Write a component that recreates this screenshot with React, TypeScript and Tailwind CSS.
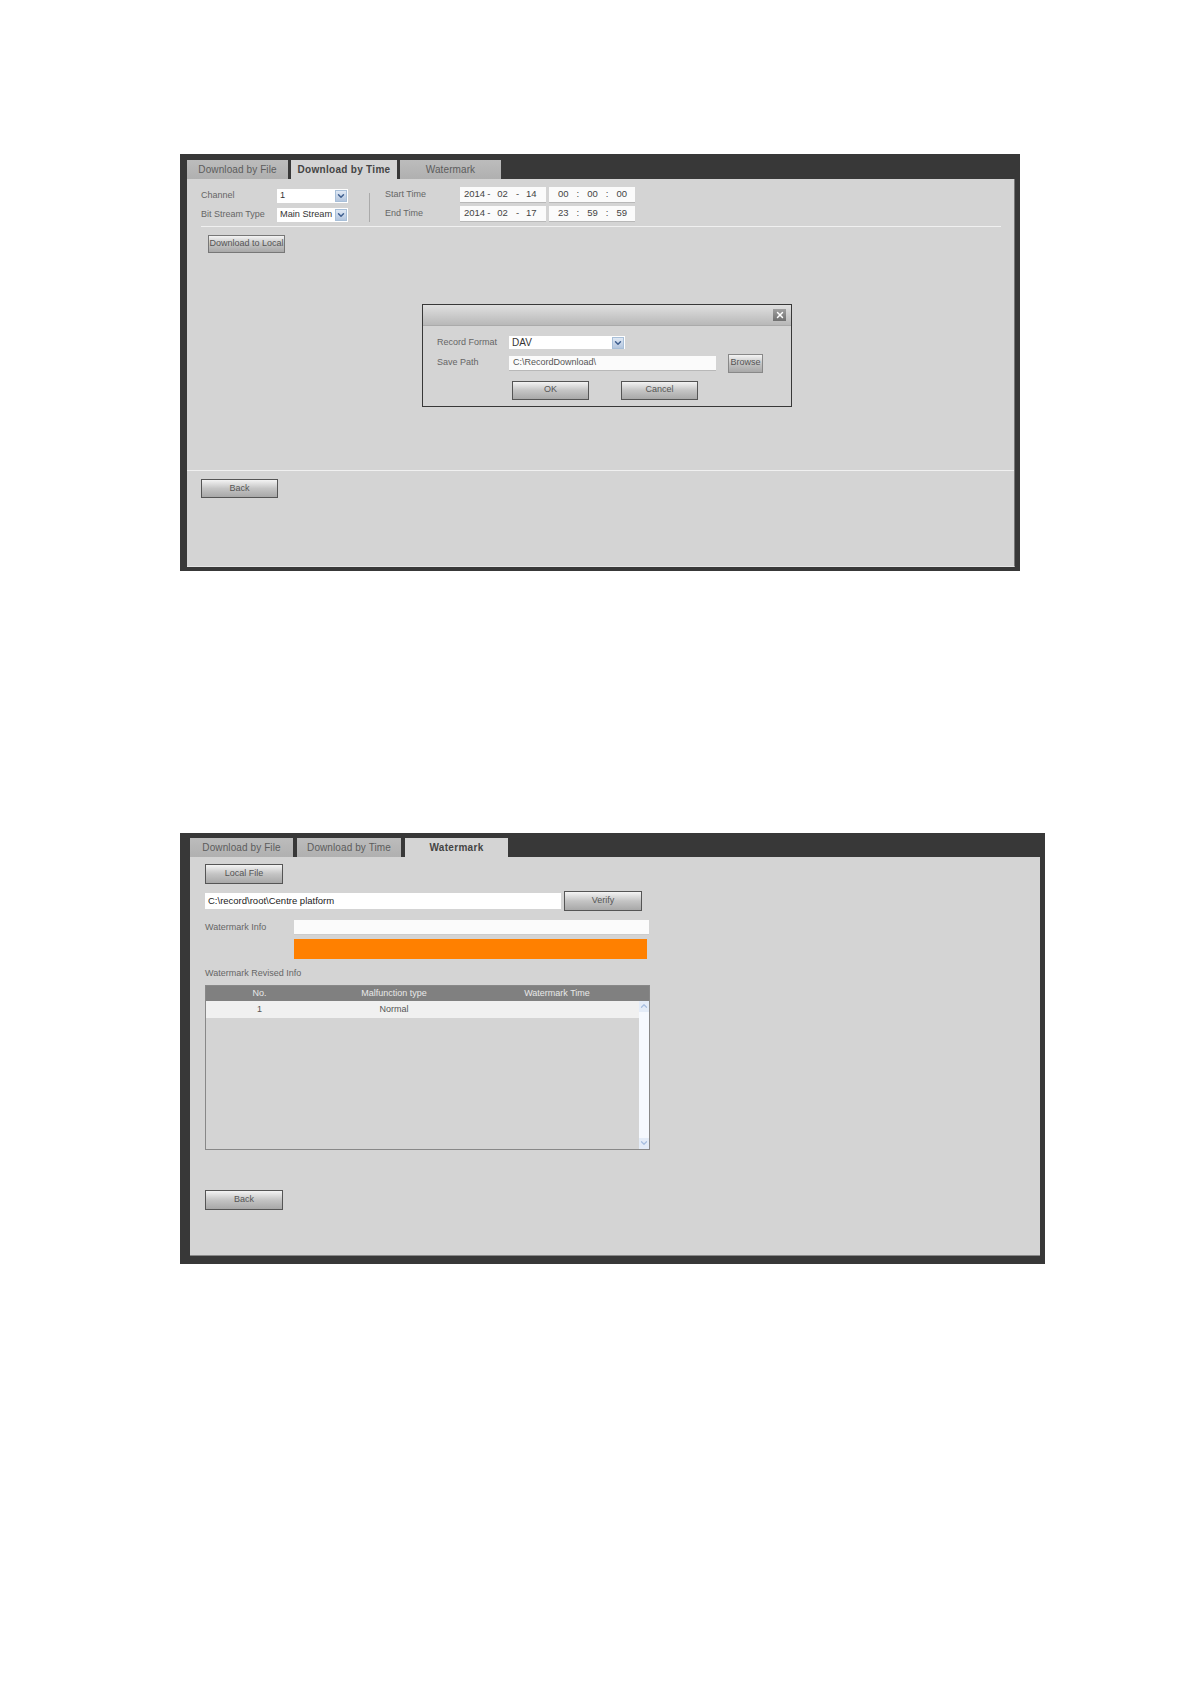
import { ChevronDown, ChevronUp, X } from 'lucide-react'

const Btn = ({ label, className = '' }: { label: string; className?: string }) => (
  <button
    type="button"
    className={`flex items-center justify-center shrink-0 border border-[#555] bg-gradient-to-b from-[#f4f4f4] via-[#c4c4c4] to-[#a8a8a8] text-[9px] text-[#555] ${className}`}
  >
    {label}
  </button>
)

const Tab = ({ label, active, className = '' }: { label: string; active?: boolean; className?: string }) => (
  <div
    className={`flex items-center justify-center h-[19px] pb-px text-[10px] ${
      active ? 'bg-[#d4d4d4] font-bold text-[#444] tracking-[0.3px]' : 'bg-gradient-to-b from-[#bcbcbc] to-[#b0b0b0] text-[#5c5c5c] tracking-[0.1px]'
    } ${className}`}
  >
    {label}
  </div>
)

const Select = ({ value, className = '' }: { value: string; className?: string }) => (
  <div className={`flex items-center bg-white text-[9.2px] text-[#333] pl-[3px] pr-px shrink-0 ${className}`}>
    <span className="flex-1 whitespace-nowrap">{value}</span>
    <span className="flex items-center justify-center w-3 h-3 border border-[#a8bfd8] bg-gradient-to-b from-[#dfe8f4] to-[#b4c6de] text-[#3f5f8f]">
      <ChevronDown size={10} strokeWidth={3.5} />
    </span>
  </div>
)

const DateBox = ({ y, m, d }: { y: string; m: string; d: string }) => (
  <div className="flex items-center w-[86px] h-4 bg-[#fbfbfb] border-b border-[#b8b8b8] pl-1 text-[9.5px] text-[#444]">
    <span>{y}</span>
    <span className="ml-[2px]">-</span>
    <span className="ml-[7px]">{m}</span>
    <span className="ml-[8px]">-</span>
    <span className="ml-[7px]">{d}</span>
  </div>
)

const TimeBox = ({ h, m, s }: { h: string; m: string; s: string }) => (
  <div className="flex items-center gap-[8px] w-[86px] h-4 bg-[#fbfbfb] border-b border-[#b8b8b8] pl-[9px] text-[9.5px] text-[#444]">
    <span>{h}</span>
    <span>:</span>
    <span>{m}</span>
    <span>:</span>
    <span>{s}</span>
  </div>
)

const label = 'text-[9px] text-[#666] shrink-0'

function DownloadByTime() {
  return (
    <section className="relative ml-[180px] w-[840px] h-[417px] bg-[#383838] pt-[6px] pl-[7px]">
      <div className="flex gap-[3px]">
        <Tab label="Download by File" className="w-[101px]" />
        <Tab label="Download by Time" active className="w-[106px]" />
        <Tab label="Watermark" className="w-[101px]" />
      </div>
      <div className="w-[828px] h-[388px] bg-[#d4d4d4] border-r border-b border-r-[#777] border-b-[#e4e4e4]">
        <div className="flex h-[47px] pt-2 pl-[14px]">
          <div className="flex flex-col gap-[5px] pt-[2px]">
            <div className="flex items-center">
              <span className={`${label} w-[76px]`}>Channel</span>
              <Select value="1" className="w-[71px] h-[14px]" />
            </div>
            <div className="flex items-center">
              <span className={`${label} w-[76px]`}>Bit Stream Type</span>
              <Select value="Main Stream" className="w-[71px] h-[14px]" />
            </div>
          </div>
          <div className="w-px h-[29px] mt-[6px] ml-[21px] mr-[15px] bg-[#aaa]" />
          <div className="flex flex-col gap-[3px]">
            <div className="flex items-center">
              <span className={`${label} w-[75px]`}>Start Time</span>
              <DateBox y="2014" m="02" d="14" />
              <div className="ml-[3px]"><TimeBox h="00" m="00" s="00" /></div>
            </div>
            <div className="flex items-center">
              <span className={`${label} w-[75px]`}>End Time</span>
              <DateBox y="2014" m="02" d="17" />
              <div className="ml-[3px]"><TimeBox h="23" m="59" s="59" /></div>
            </div>
          </div>
        </div>
        <div className="h-px ml-[14px] w-[800px] bg-[#f0f0f0]" />
        <Btn label="Download to Local" className="ml-[21px] mt-2 w-[77px] h-[18px] !text-[9px] !border-[#777] whitespace-nowrap" />
        <div className="h-px mt-[217px] bg-[#f0f0f0]" />
        <Btn label="Back" className="ml-[14px] mt-2 w-[77px] h-[19px]" />
      </div>

      <div className="absolute left-[242px] top-[150px] w-[370px] h-[103px] bg-[#d4d4d4] border border-[#383838]">
        <div className="flex items-center justify-end h-[21px] pr-[5px] bg-gradient-to-b from-[#e0e0e0] to-[#b8b8b8] border-b border-[#aaa]">
          <span className="flex items-center justify-center w-[13px] h-[12px] bg-gradient-to-b from-[#a0a0a0] to-[#707070] text-white">
            <X size={10} strokeWidth={3.5} />
          </span>
        </div>
        <div className="flex items-center mt-[10px] pl-[14px]">
          <span className={`${label} w-[72px]`}>Record Format</span>
          <Select value="DAV" className="w-[116px] h-[13px] !text-[10px]" />
        </div>
        <div className="flex items-center mt-[4px] pl-[14px]">
          <span className={`${label} w-[72px]`}>Save Path</span>
          <div className="flex items-center w-[207px] h-[15px] bg-[#fbfbfb] border-b border-[#b8b8b8] pl-1 text-[9px] text-[#555]">
            C:\RecordDownload\
          </div>
          <Btn label="Browse" className="ml-[12px] w-[35px] h-[19px] !border-[#888]" />
        </div>
        <div className="flex gap-8 mt-[8px] ml-[89px]">
          <Btn label="OK" className="w-[77px] h-[19px]" />
          <Btn label="Cancel" className="w-[77px] h-[19px]" />
        </div>
      </div>
    </section>
  )
}

function Watermark() {
  return (
    <section className="ml-[180px] mt-[262px] w-[865px] h-[431px] bg-[#383838] pt-[5px] pl-[10px]">
      <div className="flex gap-1">
        <Tab label="Download by File" className="w-[103px]" />
        <Tab label="Download by Time" className="w-[104px]" />
        <Tab label="Watermark" active className="w-[103px]" />
      </div>
      <div className="w-[850px] h-[399px] bg-[#d4d4d4] border-b border-[#888] pt-[7px] pl-[15px]">
        <Btn label="Local File" className="w-[78px] h-5" />
        <div className="flex items-center gap-[3px] mt-[7px]">
          <div className="flex items-center w-[356px] h-4 bg-white pl-[3px] text-[9.5px] text-[#222]">
            C:\record\root\Centre platform
          </div>
          <Btn label="Verify" className="w-[78px] h-5" />
        </div>
        <div className="flex items-center mt-[9px]">
          <span className={`${label} w-[89px]`}>Watermark Info</span>
          <div className="w-[355px] h-[15px] bg-[#fbfbfb] border-b border-[#ccc]" />
        </div>
        <div className="ml-[89px] mt-1 w-[353px] h-5 bg-[#ff8000]" />
        <div className={`${label} mt-2 leading-3`}>Watermark Revised Info</div>
        <div className="mt-[6px] w-[445px] h-[165px] border border-[#888]">
          <div className="grid grid-cols-[107px_162px_164px] h-[15px] items-center text-center bg-[#808080] text-[9px] text-[#e8e8e8]">
            <span>No.</span>
            <span>Malfunction type</span>
            <span>Watermark Time</span>
          </div>
          <div className="flex h-[148px]">
            <div className="flex-1">
              <div className="grid grid-cols-[107px_162px_164px] h-[17px] items-center text-center bg-[#f0f0f0] text-[9px] text-[#555]">
                <span>1</span>
                <span>Normal</span>
                <span />
              </div>
            </div>
            <div className="flex flex-col justify-between w-[11px] bg-[#f6f9fe] text-[#a9bfe0]">
              <span className="flex justify-center h-[11px] bg-[#e4ecf8]">
                <ChevronUp size={10} strokeWidth={3} />
              </span>
              <span className="flex justify-center h-[11px] bg-[#e4ecf8]">
                <ChevronDown size={10} strokeWidth={3} />
              </span>
            </div>
          </div>
        </div>
        <Btn label="Back" className="mt-[40px] w-[78px] h-5" />
      </div>
    </section>
  )
}

export default function App() {
  return (
    <div className="w-[1191px] h-[1684px] bg-white pt-[154px] font-['Liberation_Sans',Arial,sans-serif]">
      <DownloadByTime />
      <Watermark />
    </div>
  )
}
